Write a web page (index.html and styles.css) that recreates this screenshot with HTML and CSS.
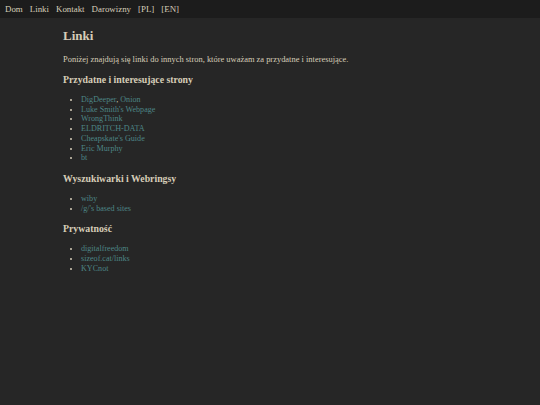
FILE: index.html
```html
<!DOCTYPE html>
<html lang="pl">
<head>
<meta charset="utf-8">
<title>Linki</title>
<link rel="stylesheet" href="styles.css">
</head>
<body>
<nav class="nav">
  <a href="#">Dom</a>
  <a href="#">Linki</a>
  <a href="#">Kontakt</a>
  <a href="#">Darowizny</a>
  <a href="#">[PL]</a>
  <a href="#">[EN]</a>
</nav>
<main class="content">
  <h1>Linki</h1>
  <p>Poniżej znajdują się linki do innych stron, które uważam za przydatne i interesujące.</p>
  <h2>Przydatne i interesujące strony</h2>
  <ul>
    <li><a href="#">DigDeeper</a>, <a href="#">Onion</a></li>
    <li><a href="#">Luke Smith's Webpage</a></li>
    <li><a href="#">WrongThink</a></li>
    <li><a href="#">ELDRITCH-DATA</a></li>
    <li><a href="#">Cheapskate's Guide</a></li>
    <li><a href="#">Eric Murphy</a></li>
    <li><a href="#">bt</a></li>
  </ul>
  <h2>Wyszukiwarki i Webringsy</h2>
  <ul>
    <li><a href="#">wiby</a></li>
    <li><a href="#">/g/'s based sites</a></li>
  </ul>
  <h2>Prywatność</h2>
  <ul>
    <li><a href="#">digitalfreedom</a></li>
    <li><a href="#">sizeof.cat/links</a></li>
    <li><a href="#">KYCnot</a></li>
  </ul>
</main>
</body>
</html>
```
FILE: styles.css
```css
html, body {
  margin: 0;
  padding: 0;
  background: #262626;
  color: #d6cdb8;
  font-family: "Liberation Serif", "Times New Roman", serif;
  font-size: 8.1px;
}
body {
  min-height: 405px;
}
a {
  color: #4d8585;
  text-decoration: none;
}
.nav {
  background: #1c1c1c;
  height: 18px;
  display: flex;
  align-items: center;
  gap: 7px;
  padding: 0 5px;
  font-size: 8.9px;
}
.nav a {
  color: #d6cdb8;
}
.content {
  padding: 0 63px;
}
h1 {
  font-size: 13px;
  margin: 10px 0 0;
  line-height: 16px;
}
p {
  font-size: 8.45px;
  margin: 10px 0 0;
  line-height: 10px;
}
h2 {
  font-size: 9.8px;
  margin: 10px 0 0;
  line-height: 12px;
}
ul {
  margin: 9px 0 0;
  padding-left: 18px;
  line-height: 9.7px;
}
```
